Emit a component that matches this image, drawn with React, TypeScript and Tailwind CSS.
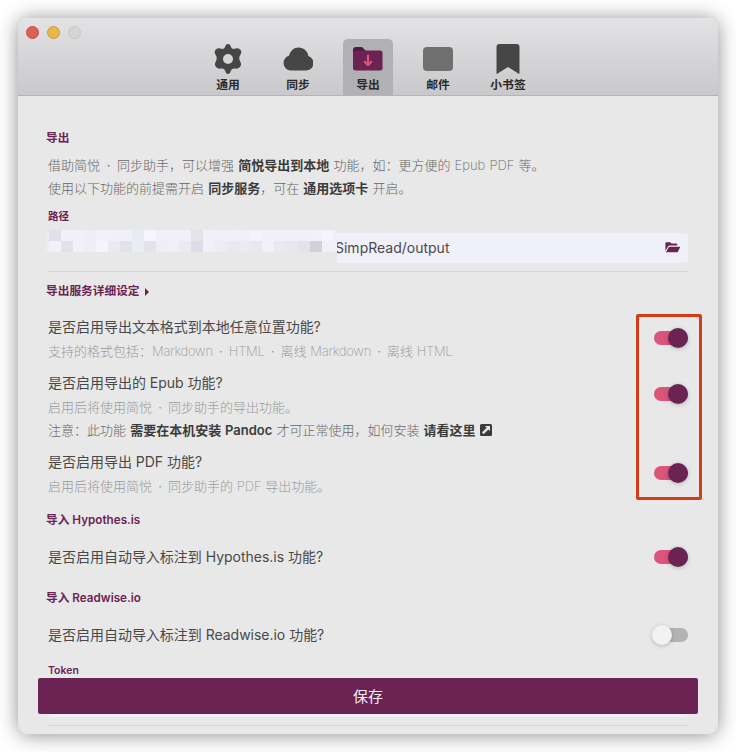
import type { ReactNode } from "react";

const fontStack = "font-['Inter','Noto_Sans_CJK_SC',sans-serif]";

function GearIcon() {
  return (
    <svg width="28" height="30" viewBox="0 0 28 30" className="block">
      <path
        d="M14 0c1.700 0 2.400 1.300 2.900 2.800.6 1.800 1.700 2.400 3.500 2 1.900-.5 4-.9 5.700.8 1.900 1.900 1.300 3.500.3 5.100-1.300 2-1.500 3.700-.6 5.900.9 2.100 2.100 3.700.5 6-1.500 2.200-3.500 2.200-5.300 1.900-2.200-.4-3.500.3-4.300 2.500C16.200 28.600 15.700 30 14 30s-2.200-1.400-2.700-3c-.8-2.200-2.100-2.900-4.300-2.500-1.800.3-3.800.3-5.300-1.900-1.600-2.300-.4-3.900.5-6 .9-2.200.7-3.900-.6-5.900-1-1.600-1.600-3.200.3-5.100 1.700-1.700 3.800-1.300 5.700-.8 1.800.4 2.900-.2 3.500-2C11.600 1.300 12.300 0 14 0Zm0 10a5 5 0 1 0 0 10 5 5 0 0 0 0-10Z"
        fill="#464646"
        fillRule="evenodd"
      />
    </svg>
  );
}

function CloudIcon() {
  return (
    <svg width="30" height="24" viewBox="0 0 30 24" className="block">
      <path
        d="M7.500 23.500A7.500 7.500 0 0 1 6 8.800C7.200 3.800 11 .4 15.700.4c5.100 0 9 3.600 9.700 8.500A7.500 7.500 0 0 1 23 23.500Z"
        fill="#464646"
      />
    </svg>
  );
}

function ExportIcon() {
  return (
    <svg width="30" height="24" viewBox="0 0 30 24" className="block">
      <path d="M0 3a3 3 0 0 1 3-3h6l4 4v4H0Z" fill="#501a3e" />
      <rect y="3.500" width="29.500" height="20" rx="2.500" fill="#6b2353" />
      <path d="M15 8.500v9.500M11.700 14.800 15 18.200l3.300-3.400" fill="none" stroke="#e0527c" strokeWidth="2.200" strokeLinecap="round" strokeLinejoin="round" />
    </svg>
  );
}

function BookmarkIcon() {
  return (
    <svg width="24" height="30" viewBox="0 0 24 30" className="block">
      <path d="M.5 3a3 3 0 0 1 3-3h17a3 3 0 0 1 3 3v26q0 1.400-1.200.6L12 23 1.700 29.600Q.5 30.400.5 29Z" fill="#464646" />
    </svg>
  );
}

function FolderOpenIcon() {
  return (
    <svg width="16" height="11" viewBox="0 0 16 11" className="-mt-[2px] block">
      <path d="M.4 9V1.300Q.4.300 1.400.300h3.800l1.300 1.300h4.800q1 0 1 1v1H4.800Q3.600 3.600 3 4.600Z" fill="#6b2353" />
      <path d="M1 10.300 3.500 5.600q.5-.9 1.500-.9h9.500q1 0 .5.900l-2 3.800q-.5.900-1.500.9Z" fill="#6b2353" />
    </svg>
  );
}

function LinkIcon() {
  return (
    <svg width="12" height="12" viewBox="0 0 12 12" className="ml-1 inline-block align-[-1px]">
      <rect width="12" height="12" rx="1.500" fill="#3b3b3b" />
      <path d="M5 2h5v5L8.400 5.400 3.600 10.200 1.900 8.500l4.800-4.800Z" fill="#e8e8e8" />
    </svg>
  );
}

function Dot() {
  return <span className="mx-[2.500px] font-normal">·</span>;
}

function Tab({ label, active, children }: { label: string; active?: boolean; children: ReactNode }) {
  return (
    <div className={`flex h-14 w-[50px] flex-col items-center rounded-t-[5px] ${active ? "bg-[#b1b1b3]" : ""}`}>
      <div className="mt-[5px] flex h-[30px] items-center justify-center">{children}</div>
      <div className="mt-[3px] text-[11.800px] leading-[17px] font-semibold whitespace-nowrap text-[#2a2a2a]">{label}</div>
    </div>
  );
}

function Heading({ className, children }: { className: string; children: ReactNode }) {
  return (
    <h2 className={`-ml-[2px] flex h-5 items-center pt-[2px] text-[11.700px] font-semibold text-[#6b2353] ${className}`}>{children}</h2>
  );
}

function FieldLabel({ className, children }: { className: string; children: ReactNode }) {
  return <div className={`flex h-5 items-center pt-[2px] text-[10.500px] font-semibold text-[#6b2353] ${className}`}>{children}</div>;
}

function Toggle({ on, className }: { on?: boolean; className: string }) {
  return (
    <div className={`flex h-5 w-9 items-center ${className}`}>
      <div className={`ml-[2px] flex h-[14px] w-[34px] items-center rounded-full ${on ? "justify-end bg-[#db547a]" : "bg-[#b3b3b3]"}`}>
        <div
          className={`size-5 shrink-0 rounded-full shadow-[0_1px_4px_rgba(0,0,0,0.22)] ${on ? "bg-[#6b2353]" : "-ml-[2px] bg-[#f2f2f2]"}`}
        />
      </div>
    </div>
  );
}

function Setting({ title, hint, note, on, className }: { title: string; hint?: ReactNode; note?: ReactNode; on?: boolean; className: string }) {
  return (
    <div className={`flex items-start justify-between ${className}`}>
      <div className="whitespace-nowrap">
        <div className="h-6 text-[14px] leading-6 tracking-[-0.02px] text-[#484848]">{title}</div>
        {hint && <div className="h-6 text-[13px] leading-6 font-extralight text-[#999]">{hint}</div>}
        {note}
      </div>
      <Toggle on={on} className={hint ? "mt-[13px]" : "mt-[2px]"} />
    </div>
  );
}

const mosaic = [
  ["#dfe0e9", "#f0f0fa", "#f0f0fa", "#eeeef9", "#f1f1fb", "#f0f0fa", "#f0f0fa", "#e8ebf3", "#f5f5ff", "#f0f0fa", "#f0f0fa", "#f0f0fa", "#e3e4e9", "#f0f0fa", "#efeffa", "#f0f0fa", "#efeffa", "#f3f3fd", "#f0f0fa", "#f0f0fa", "#f0f0fa", "#f0f0fa", "#f1f1fb", "#f5f5ff"],
  ["#f1f1fb", "#e0e1ea", "#f1f1fb", "#eeeef8", "#f4f4fe", "#e9eaf3", "#e1e2ea", "#ebecf5", "#e2e3eb", "#eeeef7", "#f0f0fa", "#e9eaf2", "#dcdde6", "#f0f0fa", "#ececf6", "#e8e9f2", "#ebebf5", "#e8e8f3", "#f1f1fb", "#e8e9f2", "#e7e7f1", "#e2e3ec", "#d0d1da", "#f0f0fa"],
];

export default function App() {
  return (
    <div className={`relative h-[752px] w-[736px] overflow-hidden bg-white p-[18px] ${fontStack}`}>
      <div className="relative h-[716px] w-[700px] rounded-[11px] shadow-[0_1px_20px_rgba(0,0,0,0.45)]">
        <div className="h-full overflow-hidden rounded-[11px] bg-[#e8e8e8]">
          <header className="relative h-[78px] border-b border-[#b4b4b6] bg-gradient-to-b from-[#e3e3e5] to-[#c9c8ca] pt-[21px]">
            <div className="absolute top-2 left-2 flex gap-2">
              <i className="size-[13px] rounded-full border border-[#ca4a42] bg-[#dd6057]" />
              <i className="size-[13px] rounded-full border border-[#cf9b3b] bg-[#eab64a]" />
              <i className="size-[13px] rounded-full border border-[#c5c5c5] bg-[#d5d5d6]" />
            </div>
            <nav className="flex justify-center gap-5">
              <Tab label="通用"><GearIcon /></Tab>
              <Tab label="同步"><CloudIcon /></Tab>
              <Tab label="导出" active><ExportIcon /></Tab>
              <Tab label="邮件"><div className="h-6 w-[30px] rounded-[4px] bg-[#6f6f6f]" /></Tab>
              <Tab label="小书签"><BookmarkIcon /></Tab>
            </nav>
          </header>

          <main className="flex flex-col px-[30px]">
            <Heading className="mt-8">导出</Heading>
            <div className="mt-[6px] text-[13px] leading-[23px] font-extralight whitespace-nowrap text-[#666] [word-spacing:0.5px] [&_b]:font-semibold [&_b]:text-[#3b3b3b]">
              <p>借助简悦 <Dot /> 同步助手，可以增强 <b>简悦导出到本地</b> 功能，如：更方便的 Epub PDF 等。</p>
              <p>使用以下功能的前提需开启 <b>同步服务</b>，可在 <b>通用选项卡</b> 开启。</p>
            </div>
            <FieldLabel className="mt-[6px]">路径</FieldLabel>
            <div className="relative mt-[7px] flex h-[30px] items-center justify-between rounded-[4px] bg-[#f0f0fa] pr-[7px] pl-[287px]">
              <span className="-mt-[2px] text-[14px] text-[#4a4a4a]">SimpRead/output</span>
              <FolderOpenIcon />
              <div className="absolute -top-[3px] -left-[2px] h-[33px] w-[291px] bg-[#e8e8e8]">
                {mosaic.map((row, i) => (
                  <div key={i} className="flex h-[11px] bg-[#ebecf1] pl-[2.800px]">
                    {row.map((color, j) => (
                      <span key={j} className="h-full w-[11.870px] shrink-0" style={{ backgroundColor: color }} />
                    ))}
                    <span className="h-full grow bg-[#f0f0fa]" />
                  </div>
                ))}
              </div>
            </div>
            <hr className="mt-2 h-px border-0 bg-[#d6d6d6]" />

            <Heading className="mt-[9px]">
              导出服务详细设定
              <i className="ml-[5px] border-y-[4px] border-l-[4px] border-y-transparent border-l-[#6b2353]" />
            </Heading>
            <Setting
              className="mt-[14px]"
              on
              title="是否启用导出文本格式到本地任意位置功能?"
              hint={
                <>
                  支持的格式包括：<span className="tracking-[-0.25px]">Markdown</span> <Dot /> <span className="tracking-[-0.25px]">HTML</span> <Dot /> 离线{" "}
                  <span className="tracking-[-0.25px]">Markdown</span> <Dot /> 离线 <span className="tracking-[-0.25px]">HTML</span>
                </>
              }
            />
            <Setting
              className="mt-2"
              on
              title="是否启用导出的 Epub 功能?"
              hint={<>启用后将使用简悦 <Dot /> 同步助手的导出功能。</>}
              note={
                <div className="h-[23px] text-[13px] leading-[23px] font-extralight text-[#666] [word-spacing:0.5px] [&_b]:font-semibold [&_b]:text-[#3b3b3b]">
                  注意：此功能 <b>需要在本机安装 Pandoc</b> 才可正常使用，如何安装 <b>请看这里</b>
                  <LinkIcon />
                </div>
              }
            />
            <Setting className="mt-2" on title="是否启用导出 PDF 功能?" hint={<>启用后将使用简悦 <Dot /> 同步助手的 PDF 导出功能。</>} />
            <Heading className="mt-3">导入 Hypothes.is</Heading>
            <Setting className="mt-[15px]" on title="是否启用自动导入标注到 Hypothes.is 功能?" />
            <Heading className="mt-[19px]">导入 Readwise.io</Heading>
            <Setting className="mt-[15px]" title="是否启用自动导入标注到 Readwise.io 功能?" />
            <FieldLabel className="mt-[13px]">Token</FieldLabel>
            <div className="mt-[7px] h-[30px] rounded-[4px] bg-[#f0f0fa]" />
            <hr className="mt-2 h-px border-0 bg-[#d6d6d6]" />
          </main>
        </div>
        <button className="absolute bottom-5 left-5 h-9 w-[660px] rounded-[2px] bg-[#6b2353] pt-[2px] text-[15px] text-[#f5eff3]">保存</button>
      </div>
      <div className="absolute top-[314px] left-[636px] h-[186px] w-[66px] rounded-[2px] border-[3px] border-[#d43c15]" />
    </div>
  );
}
